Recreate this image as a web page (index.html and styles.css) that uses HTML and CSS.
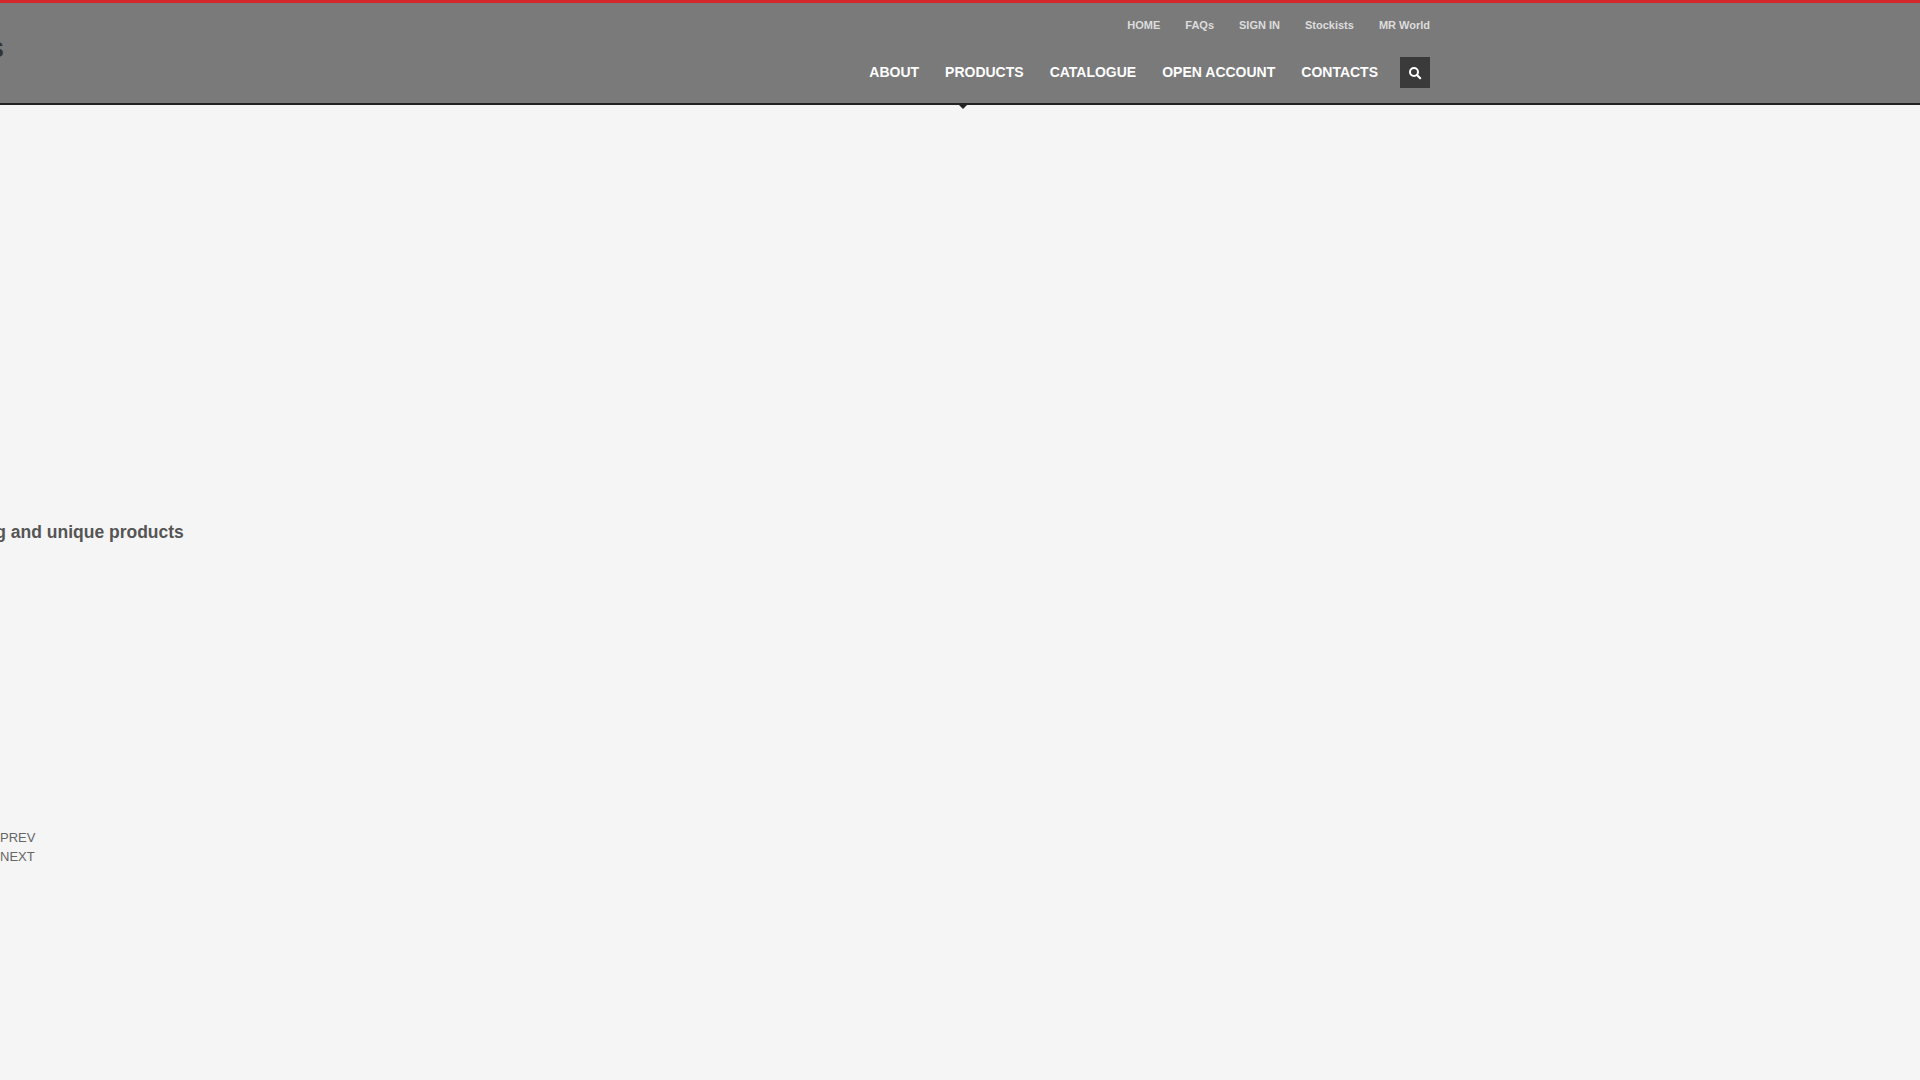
FILE: index.html
```html
<!DOCTYPE html>
<html lang="en">
<head>
<meta charset="UTF-8" />
<meta name="viewport" content="width=device-width, initial-scale=1" />
<title>Products</title>
<link rel="stylesheet" href="styles.css">
</head>
<body>

<header id="header">
  <div class="logo">S</div>
  <div class="nav-wrap">
    <ul class="top-nav">
      <li><a href="#">HOME</a></li>
      <li><a href="#">FAQs</a></li>
      <li><a href="#">SIGN IN</a></li>
      <li><a href="#">Stockists</a></li>
      <li><a href="#">MR World</a></li>
    </ul>
    <div class="main-row">
      <ul class="main-nav">
        <li><a href="#">ABOUT</a></li>
        <li><a href="#">PRODUCTS</a></li>
        <li><a href="#">CATALOGUE</a></li>
        <li><a href="#">OPEN ACCOUNT</a></li>
        <li><a href="#">CONTACTS</a></li>
      </ul>
      <a class="search-btn" href="#" aria-label="Search">
        <svg width="14" height="14" viewBox="0 0 14 14">
          <circle cx="6" cy="6" r="4" fill="none" stroke="#fff" stroke-width="2" />
          <path d="M9 9l3.2 3.2" stroke="#fff" stroke-width="2.2" stroke-linecap="round" />
        </svg>
      </a>
    </div>
  </div>
  <span class="header-arrow"></span>
</header>

<main id="slider">
  <h2 class="slide-title">Amazing and unique products</h2>
  <ul class="slider-nav">
    <li><a href="#">PREV</a></li>
    <li><a href="#">NEXT</a></li>
  </ul>
</main>

</body>
</html>
```

FILE: styles.css
```css
html, body {
  height: 100%;
}

body {
  margin: 0;
  font-family: "Liberation Sans", Arial, sans-serif;
  background: #f5f5f5;
  overflow: hidden;
}

ul {
  list-style: none;
  margin: 0;
  padding: 0;
}

a {
  text-decoration: none;
  color: inherit;
}

#header {
  position: relative;
  display: flex;
  justify-content: space-between;
  height: 100px;
  padding-right: 490px;
  background: #7a7a7a;
  border-top: 3px solid #d3272b;
  border-bottom: 2px solid #222;
}

.logo {
  margin: 33px 0 0 -11px;
  font-size: 22px;
  line-height: 28px;
  font-weight: 700;
  color: #333;
}

.nav-wrap {
  display: flex;
  flex-direction: column;
  align-items: flex-end;
}

/* Top links */
.top-nav {
  display: flex;
  gap: 25px;
  margin-top: 15px;
  font-size: 11px;
  line-height: 14px;
  font-weight: 700;
  color: #ddd;
}

.main-row {
  display: flex;
  align-items: flex-start;
  margin-top: 25px;
}

.main-nav {
  display: flex;
  gap: 26px;
  margin-top: 5px;
  font-size: 14px;
  line-height: 20px;
  font-weight: 700;
  color: #fff;
}

.search-btn {
  display: flex;
  align-items: flex-start;
  justify-content: center;
  box-sizing: border-box;
  width: 30px;
  height: 31px;
  margin-left: 22px;
  padding-top: 9px;
  background: #3a3a3a;
}

.header-arrow {
  position: absolute;
  left: 958px;
  bottom: -6px;
  border-left: 5px solid transparent;
  border-right: 5px solid transparent;
  border-top: 5px solid #222;
}

/* Slider */
#slider {
  color: #555;
}

.slide-title {
  margin: 416px 0 0 -67px;
  font-size: 17.5px;
  line-height: 22px;
  font-weight: 700;
  white-space: nowrap;
}

.slider-nav {
  margin-top: 285px;
  font-size: 13px;
  line-height: 19px;
  color: #666;
}
```
